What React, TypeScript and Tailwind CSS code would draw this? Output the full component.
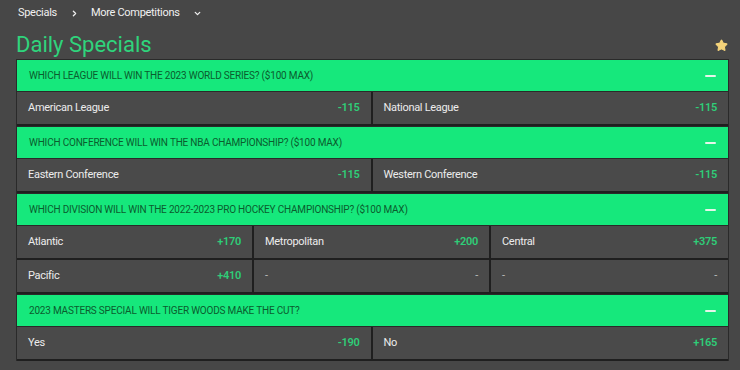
import { Star, ChevronRight, ChevronDown } from "lucide-react";

type Outcome = { label: string; odds: string };
type Market = { title: string; cols: 2 | 3; outcomes: Outcome[] };

const markets: Market[] = [
  {
    title: "Which League will win the 2023 World Series? ($100 MAX)",
    cols: 2,
    outcomes: [
      { label: "American League", odds: "-115" },
      { label: "National League", odds: "-115" },
    ],
  },
  {
    title: "Which Conference will win the NBA Championship? ($100 MAX)",
    cols: 2,
    outcomes: [
      { label: "Eastern Conference", odds: "-115" },
      { label: "Western Conference", odds: "-115" },
    ],
  },
  {
    title: "Which Division will win the 2022-2023 Pro Hockey Championship? ($100 MAX)",
    cols: 3,
    outcomes: [
      { label: "Atlantic", odds: "+170" },
      { label: "Metropolitan", odds: "+200" },
      { label: "Central", odds: "+375" },
      { label: "Pacific", odds: "+410" },
      { label: "-", odds: "-" },
      { label: "-", odds: "-" },
    ],
  },
  {
    title: "2023 Masters Special Will Tiger Woods Make the Cut?",
    cols: 2,
    outcomes: [
      { label: "Yes", odds: "-190" },
      { label: "No", odds: "+165" },
    ],
  },
];

function MarketBlock({ market }: { market: Market }) {
  return (
    <div>
      <div className="h-[33px] bg-[#16e87c] border-y border-[#2a2a2a] flex items-center justify-between pl-[12px] pr-[12px]">
        <span className="text-[10px] uppercase tracking-[-0.2px] text-[#0b5c2e]">{market.title}</span>
        <span className="w-[11px] h-[2px] bg-[#e6f5ea] rounded-sm"></span>
      </div>
      <div className={market.cols === 3 ? "grid grid-cols-3" : "grid grid-cols-2"}>
        {market.outcomes.map((o, i) => (
          <div
            key={i}
            className={
              "h-[34px] bg-[#4a4a4a] border-b-2 border-[#1f1f1f] flex items-center justify-between pl-[11px] pr-[11px] tracking-[-0.3px] " +
              ((i + 1) % market.cols !== 0 ? "border-r-2" : "")
            }
          >
            <span className={o.label === "-" ? "text-[11px] text-[#bdbdbd]" : "text-[11px] text-[#ececec]"}>{o.label}</span>
            <span className={o.odds === "-" ? "text-[11px] text-[#bdbdbd]" : "text-[11px] font-semibold text-[#2fce78]"}>{o.odds}</span>
          </div>
        ))}
      </div>
    </div>
  );
}

export default function App() {
  return (
    <div className="w-[740px] h-[370px] bg-[#474747] overflow-hidden" style={{ fontFamily: "Roboto, 'Liberation Sans', sans-serif" }}>
      <div className="h-[26px] flex items-center pl-[18px] text-[11px] tracking-[-0.3px] text-[#f0f0f0]">
        <span>Specials</span>
        <ChevronRight className="w-[9px] h-[9px] ml-[13px] mr-[12px]" strokeWidth={3.5} />
        <span>More Competitions</span>
        <ChevronDown className="w-[9px] h-[9px] ml-[13px]" strokeWidth={3.5} />
      </div>
      <div className="mt-[4px] h-[29px] flex items-center justify-between pl-[16px] pr-[12px]">
        <h1 className="text-[22px] leading-[29px] text-[#2fd47c]">Daily Specials</h1>
        <Star className="w-[13px] h-[13px] text-[#f4d37a] mt-[1px]" fill="#f4d37a" />
      </div>
      <div className="ml-[16px] w-[713px] border-x border-[#2a2a2a]">
        {markets.map((m, i) => (
          <MarketBlock key={i} market={m} />
        ))}
      </div>
    </div>
  );
}
